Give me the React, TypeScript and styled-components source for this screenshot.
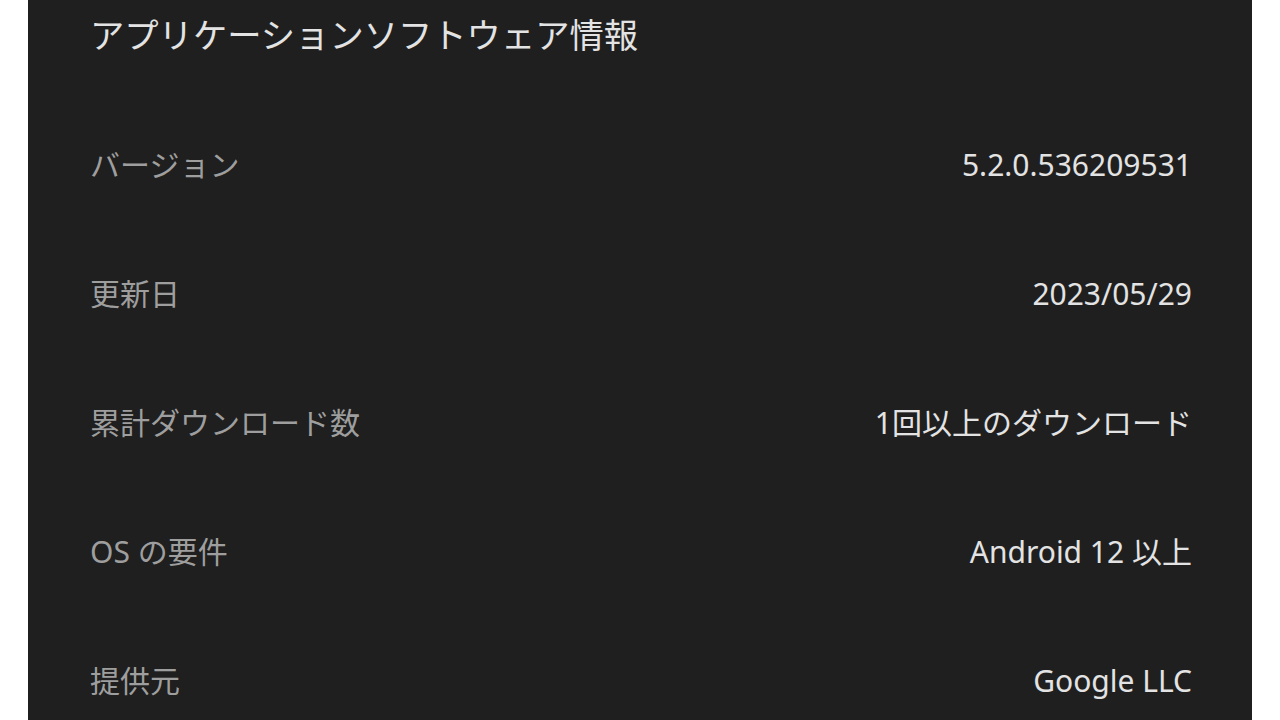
import React from 'react'
import styled, { createGlobalStyle } from 'styled-components'

const GlobalStyle = createGlobalStyle`
  html, body {
    margin: 0;
    padding: 0;
    background: #ffffff;
  }
  body {
    font-family: "Noto Sans", "Noto Sans CJK JP", sans-serif;
    overflow: hidden;
  }
`

const Panel = styled.div`
  margin: 0 28px;
  height: 720px;
  background: #1f1f1f;
  padding: 0 60px 0 62px;
  box-sizing: border-box;
  display: flex;
  flex-direction: column;
  overflow: hidden;
`

const Title = styled.h1`
  margin: 0;
  height: 70px;
  line-height: 70px;
  font-size: 34.3px;
  font-weight: 400;
  color: #e3e3e3;
  white-space: nowrap;
`

const List = styled.div`
  display: flex;
  flex-direction: column;
  padding-top: 30px;
`

const Row = styled.div`
  height: 129px;
  flex-shrink: 0;
  display: flex;
  align-items: center;
  justify-content: space-between;
  font-size: 30px;
  line-height: 40px;
`

const Label = styled.span`
  color: #9e9e9e;
`

const Value = styled.span`
  color: #e3e3e3;
`

const rows = [
  { label: 'バージョン', value: '5.2.0.536209531' },
  { label: '更新日', value: '2023/05/29' },
  { label: '累計ダウンロード数', value: '1回以上のダウンロード' },
  { label: 'OS の要件', value: 'Android 12 以上' },
  { label: '提供元', value: 'Google LLC' },
]

const App = () => {
  return (
    <>
      <GlobalStyle />
      <Panel>
        <Title>アプリケーションソフトウェア情報</Title>
        <List>
          {rows.map((row) => (
            <Row key={row.label}>
              <Label>{row.label}</Label>
              <Value>{row.value}</Value>
            </Row>
          ))}
        </List>
      </Panel>
    </>
  )
}

export default App
